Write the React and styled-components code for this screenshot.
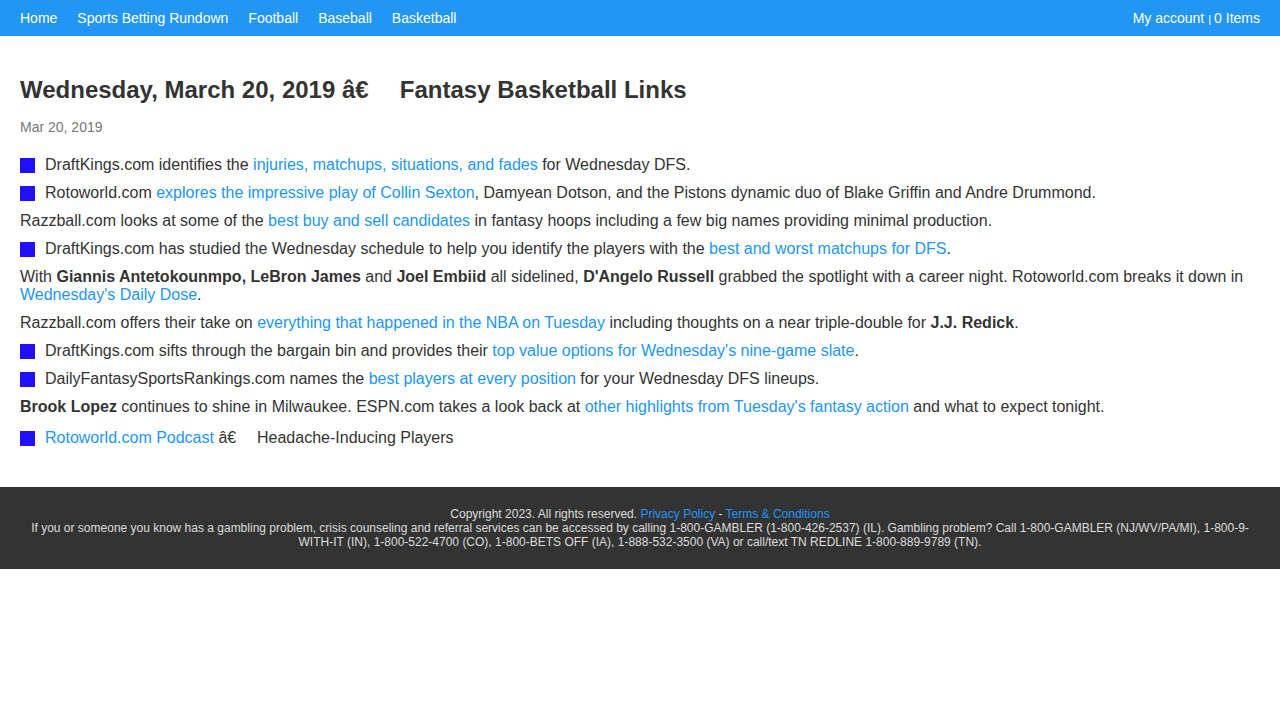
import React from "react";
import styled, { createGlobalStyle } from "styled-components";

const GlobalStyle = createGlobalStyle`
    body {
        margin: 0;
        font-family: "Liberation Sans", Arial, Helvetica, sans-serif;
        color: #333;
        background: #fff;
    }
`

const NavBar = styled.nav`
    height: 36px;
    background: #2196f3;
    display: flex;
    align-items: center;
    justify-content: space-between;
    padding: 0 20px;
`

const NavLinks = styled.div`
    display: flex;
    gap: 20px;
`

const NavLink = styled.a`
    color: #fff;
    font-size: 14px;
    text-decoration: none;
`

const Account = styled.div`
    color: #fff;
    font-size: 14px;
`

const Pipe = styled.span`
    font-size: 11px;
    margin: 0 3px 0 4px;
`

const Main = styled.main`
    padding: 40px 20px 30px;
`

const Title = styled.h1`
    font-size: 24px;
    font-weight: 700;
    line-height: 28px;
    margin: 0 0 15px;
    color: #333;
`

const DateLine = styled.div`
    font-size: 14px;
    color: #777;
    margin-bottom: 21px;
`

const Item = styled.p`
    font-size: 16px;
    line-height: 18px;
    margin: 0 0 10px;
    display: flex;
    align-items: center;
    margin-top: ${(p) => (p.$spaced ? "13px" : "0")};
`

const Para = styled.p`
    font-size: 16px;
    line-height: 18px;
    margin: 0 0 10px;
`

const Square = styled.span`
    flex: none;
    width: 15px;
    height: 15px;
    background: #2010ff;
    margin-right: 10px;
`

const Link = styled.a`
    color: #2196f3;
    text-decoration: none;
`

const Blank = styled.span`
    display: inline-block;
    width: 1.3em;
`

const Footer = styled.footer`
    background: #333;
    color: #ddd;
    font-size: 12px;
    line-height: 14px;
    text-align: center;
    padding: 20px 20px 20px;
`

const FootLink = styled.a`
    color: #2196f3;
    text-decoration: none;
`

function App() {
    return (
        <>
            <GlobalStyle />
            <NavBar>
                <NavLinks>
                    <NavLink>Home</NavLink>
                    <NavLink>Sports Betting Rundown</NavLink>
                    <NavLink>Football</NavLink>
                    <NavLink>Baseball</NavLink>
                    <NavLink>Basketball</NavLink>
                </NavLinks>
                <Account>
                    My account<Pipe>|</Pipe>0 Items
                </Account>
            </NavBar>

            <Main>
                <Title>Wednesday, March 20, 2019 â€<Blank />Fantasy Basketball Links</Title>
                <DateLine>Mar 20, 2019</DateLine>

                <Item>
                    <Square />
                    <span>DraftKings.com identifies the <Link>injuries, matchups, situations, and fades</Link> for Wednesday DFS.</span>
                </Item>
                <Item>
                    <Square />
                    <span>Rotoworld.com <Link>explores the impressive play of Collin Sexton</Link>, Damyean Dotson, and the Pistons dynamic duo of Blake Griffin and Andre Drummond.</span>
                </Item>
                <Para>
                    Razzball.com looks at some of the <Link>best buy and sell candidates</Link> in fantasy hoops including a few big names providing minimal production.
                </Para>
                <Item>
                    <Square />
                    <span>DraftKings.com has studied the Wednesday schedule to help you identify the players with the <Link>best and worst matchups for DFS</Link>.</span>
                </Item>
                <Para>
                    With <b>Giannis Antetokounmpo, LeBron James</b> and <b>Joel Embiid</b> all sidelined, <b>D'Angelo Russell</b> grabbed the spotlight with a career night. Rotoworld.com breaks it down in <Link>Wednesday's Daily Dose</Link>.
                </Para>
                <Para>
                    Razzball.com offers their take on <Link>everything that happened in the NBA on Tuesday</Link> including thoughts on a near triple-double for <b>J.J. Redick</b>.
                </Para>
                <Item>
                    <Square />
                    <span>DraftKings.com sifts through the bargain bin and provides their <Link>top value options for Wednesday's nine-game slate</Link>.</span>
                </Item>
                <Item>
                    <Square />
                    <span>DailyFantasySportsRankings.com names the <Link>best players at every position</Link> for your Wednesday DFS lineups.</span>
                </Item>
                <Para>
                    <b>Brook Lopez</b> continues to shine in Milwaukee. ESPN.com takes a look back at <Link>other highlights from Tuesday's fantasy action</Link> and what to expect tonight.
                </Para>
                <Item $spaced>
                    <Square />
                    <span><Link>Rotoworld.com Podcast</Link> â€<Blank />Headache-Inducing Players</span>
                </Item>
            </Main>

            <Footer>
                Copyright 2023. All rights reserved. <FootLink>Privacy Policy</FootLink> - <FootLink>Terms &amp; Conditions</FootLink>
                <br />
                If you or someone you know has a gambling problem, crisis counseling and referral services can be accessed by calling 1-800-GAMBLER (1-800-426-2537) (IL). Gambling problem? Call 1-800-GAMBLER (NJ/WV/PA/MI), 1-800-9-WITH-IT (IN), 1-800-522-4700 (CO), 1-800-BETS OFF (IA), 1-888-532-3500 (VA) or call/text TN REDLINE 1-800-889-9789 (TN).
            </Footer>
        </>
    );
}

export default App;
